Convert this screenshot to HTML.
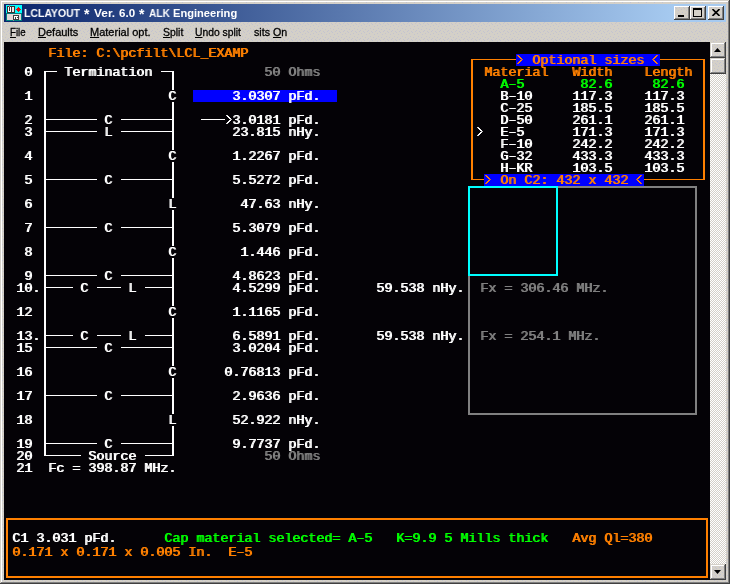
<!DOCTYPE html>
<html><head><meta charset="utf-8"><style>
html,body{margin:0;padding:0;width:730px;height:584px;overflow:hidden;background:#d4d0c8;}
body{position:relative;}
body>div,body>span{position:absolute;}
.t{position:absolute;will-change:transform;font-family:"Liberation Mono",monospace;font-weight:normal;text-shadow:1px 0 0 currentColor;font-size:13.333px;line-height:12px;height:12px;white-space:pre;}
.ttl{position:absolute;will-change:transform;font-family:"Liberation Sans",sans-serif;font-weight:bold;font-size:11px;line-height:18px;color:#fff;white-space:pre;}
.mnu{position:absolute;font-family:"Liberation Sans",sans-serif;font-size:11px;line-height:14px;color:#000;white-space:pre;-webkit-text-stroke:0.3px #000;}
</style></head><body>
<div style="left:0px;top:0px;width:730px;height:584px;background:#d4d0c8;"></div>
<div style="left:1px;top:1px;width:728px;height:1px;background:#fff;"></div>
<div style="left:1px;top:1px;width:1px;height:582px;background:#fff;"></div>
<div style="left:0px;top:583px;width:730px;height:1px;background:#404040;"></div>
<div style="left:729px;top:0px;width:1px;height:584px;background:#404040;"></div>
<div style="left:1px;top:582px;width:728px;height:1px;background:#808080;"></div>
<div style="left:728px;top:1px;width:1px;height:582px;background:#808080;"></div>
<div style="left:4px;top:4px;width:722px;height:18px;background:linear-gradient(to right,#0a246a 0px,#a6caf0 670px);"></div>
<svg style="position:absolute;left:6px;top:5px" width="16" height="16" viewBox="0 0 16 16" shape-rendering="crispEdges">
<rect x="0" y="0" width="16" height="8" fill="#00ffff"/>
<rect x="0" y="8" width="16" height="8" fill="#008080"/>
<rect x="1" y="9" width="14" height="6" fill="#e4d6d6"/>
<rect x="1" y="1" width="8" height="7" fill="#3c3434"/>
<rect x="2" y="2" width="1" height="5" fill="#fff"/><rect x="4" y="2" width="1" height="5" fill="#fff"/><rect x="2" y="6" width="3" height="1" fill="#fff"/>
<rect x="6" y="2" width="2" height="5" fill="#e8e8e8"/>
<rect x="3" y="0" width="1" height="2" fill="#909090"/>
<path d="M12.5 1.5 L15 4.5 L12.5 7.5 L10 4.5 Z" fill="#e01010"/>
<rect x="7" y="10" width="6" height="5" fill="#404040"/>
<rect x="8" y="11" width="1" height="3" fill="#fff"/><rect x="9" y="11" width="1" height="1" fill="#fff"/>
<rect x="10" y="11" width="2" height="1" fill="#fff"/><rect x="10" y="11" width="1" height="3" fill="#fff"/><rect x="10" y="13" width="2" height="1" fill="#fff"/>
<rect x="7" y="15" width="1" height="1" fill="#909090"/>
</svg>
<span class="ttl" style="left:24px;top:4px;transform:scaleX(0.95);transform-origin:0 0;">LCLAYOUT</span>
<span class="ttl" style="left:93.5px;top:4px;transform:scaleX(1.08);transform-origin:0 0;">Ver.</span>
<span class="ttl" style="left:118.5px;top:4px;transform:scaleX(1.05);transform-origin:0 0;">6.0</span>
<span class="ttl" style="left:148.5px;top:4px;transform:scaleX(0.92);transform-origin:0 0;">ALK</span>
<span class="ttl" style="left:172.5px;top:4px;transform:scaleX(1.01);transform-origin:0 0;">Engineering</span>
<span class="ttl" style="left:83.5px;top:5px;font-size:14px;">*</span>
<span class="ttl" style="left:138.5px;top:5px;font-size:14px;">*</span>
<div style="left:674px;top:6px;width:16px;height:14px;background:#404040;"></div>
<div style="left:674px;top:6px;width:15px;height:13px;background:#fff;"></div>
<div style="left:675px;top:7px;width:14px;height:12px;background:#808080;"></div>
<div style="left:675px;top:7px;width:13px;height:11px;background:#d4d0c8;"></div>
<div style="left:690px;top:6px;width:16px;height:14px;background:#404040;"></div>
<div style="left:690px;top:6px;width:15px;height:13px;background:#fff;"></div>
<div style="left:691px;top:7px;width:14px;height:12px;background:#808080;"></div>
<div style="left:691px;top:7px;width:13px;height:11px;background:#d4d0c8;"></div>
<div style="left:708px;top:6px;width:16px;height:14px;background:#404040;"></div>
<div style="left:708px;top:6px;width:15px;height:13px;background:#fff;"></div>
<div style="left:709px;top:7px;width:14px;height:12px;background:#808080;"></div>
<div style="left:709px;top:7px;width:13px;height:11px;background:#d4d0c8;"></div>
<svg style="position:absolute;left:0;top:0" width="730" height="30"><rect x="675" y="7" width="13" height="11" fill="url(#dth)"/><rect x="691" y="7" width="13" height="11" fill="url(#dth)"/><rect x="709" y="7" width="13" height="11" fill="url(#dth)"/></svg>
<div style="left:678px;top:15px;width:6px;height:2px;background:#000;"></div>
<div style="left:693px;top:8px;width:9px;height:9px;background:#000;"></div>
<div style="left:694px;top:10px;width:7px;height:6px;background:#d4d0c8;"></div>
<svg style="position:absolute;left:712px;top:9px" width="8" height="7" viewBox="0 0 8 7"><path d="M0.5 0 L7.5 7 M7.5 0 L0.5 7" stroke="#000" stroke-width="1.6"/></svg>
<svg style="position:absolute;left:0;top:0" width="730" height="584"><defs><pattern id="dth" width="8" height="8" patternUnits="userSpaceOnUse"><rect x="1" y="1" width="1" height="1" fill="#c4c3d0"/><rect x="4" y="0" width="1" height="1" fill="#c4c3d0"/><rect x="6" y="2" width="1" height="1" fill="#c4c3d0"/><rect x="2" y="4" width="1" height="1" fill="#c4c3d0"/><rect x="5" y="5" width="1" height="1" fill="#c4c3d0"/><rect x="0" y="6" width="1" height="1" fill="#c4c3d0"/><rect x="7" y="7" width="1" height="1" fill="#c4c3d0"/><rect x="3" y="7" width="1" height="1" fill="#c4c3d0"/></pattern></defs><rect x="4" y="22" width="722" height="20" fill="url(#dth)"/><rect x="2" y="22" width="2" height="558" fill="url(#dth)"/><rect x="726" y="22" width="2" height="558" fill="url(#dth)"/><rect x="2" y="580" width="726" height="2" fill="url(#dth)"/><rect x="2" y="2" width="726" height="2" fill="url(#dth)"/></svg>
<span class="mnu" style="left:10px;top:25px;transform:scaleX(0.88);transform-origin:0 0;"><u>F</u>ile</span>
<span class="mnu" style="left:38px;top:25px;transform:scaleX(1);transform-origin:0 0;"><u>D</u>efaults</span>
<span class="mnu" style="left:90px;top:25px;transform:scaleX(1);transform-origin:0 0;"><u>M</u>aterial opt.</span>
<span class="mnu" style="left:163px;top:25px;transform:scaleX(0.95);transform-origin:0 0;"><u>S</u>plit</span>
<span class="mnu" style="left:195px;top:25px;transform:scaleX(0.94);transform-origin:0 0;"><u>U</u>ndo split</span>
<span class="mnu" style="left:253.5px;top:25px;transform:scaleX(0.97);transform-origin:0 0;">sits <u>O</u>n</span>
<div style="left:4px;top:42px;width:706px;height:538px;background:#040206;"></div>
<div style="left:710px;top:58px;width:16px;height:506px;background-color:#fff;background-image:linear-gradient(45deg,#d4d0c8 25%,transparent 25%,transparent 75%,#d4d0c8 75%),linear-gradient(45deg,#d4d0c8 25%,transparent 25%,transparent 75%,#d4d0c8 75%);background-size:2px 2px;background-position:0 0,1px 1px;"></div>
<div style="left:710px;top:42px;width:16px;height:16px;background:#404040;"></div>
<div style="left:710px;top:42px;width:15px;height:15px;background:#d4d0c8;"></div>
<div style="left:711px;top:43px;width:14px;height:14px;background:#808080;"></div>
<div style="left:711px;top:43px;width:13px;height:13px;background:#fff;"></div>
<div style="left:712px;top:44px;width:12px;height:12px;background:#d4d0c8;"></div>
<div style="left:710px;top:564px;width:16px;height:16px;background:#404040;"></div>
<div style="left:710px;top:564px;width:15px;height:15px;background:#d4d0c8;"></div>
<div style="left:711px;top:565px;width:14px;height:14px;background:#808080;"></div>
<div style="left:711px;top:565px;width:13px;height:13px;background:#fff;"></div>
<div style="left:712px;top:566px;width:12px;height:12px;background:#d4d0c8;"></div>
<div style="left:710px;top:58px;width:16px;height:16px;background:#404040;"></div>
<div style="left:710px;top:58px;width:15px;height:15px;background:#d4d0c8;"></div>
<div style="left:711px;top:59px;width:14px;height:14px;background:#808080;"></div>
<div style="left:711px;top:59px;width:13px;height:13px;background:#fff;"></div>
<div style="left:712px;top:60px;width:12px;height:12px;background:#d4d0c8;"></div>
<svg style="position:absolute;left:0;top:0" width="730" height="584"><rect x="712" y="44" width="12" height="12" fill="url(#dth)"/><rect x="712" y="60" width="12" height="12" fill="url(#dth)"/><rect x="712" y="566" width="12" height="12" fill="url(#dth)"/></svg>
<svg style="position:absolute;left:714px;top:48px" width="7" height="4"><path d="M3.5 0 L7 4 L0 4 Z" fill="#000"/></svg>
<svg style="position:absolute;left:714px;top:570px" width="7" height="4"><path d="M0 0 L7 0 L3.5 4 Z" fill="#000"/></svg>
<span class="t" style="left:48px;top:48px;color:#ff8000;">File:&nbsp;C:\pcfilt\LCL_EXAMP</span>
<span class="t" style="left:24px;top:67px;color:#ffffff;">0</span>
<span class="t" style="left:24px;top:91px;color:#ffffff;">1</span>
<span class="t" style="left:24px;top:115px;color:#ffffff;">2</span>
<span class="t" style="left:24px;top:127px;color:#ffffff;">3</span>
<span class="t" style="left:24px;top:151px;color:#ffffff;">4</span>
<span class="t" style="left:24px;top:175px;color:#ffffff;">5</span>
<span class="t" style="left:24px;top:199px;color:#ffffff;">6</span>
<span class="t" style="left:24px;top:223px;color:#ffffff;">7</span>
<span class="t" style="left:24px;top:247px;color:#ffffff;">8</span>
<span class="t" style="left:24px;top:271px;color:#ffffff;">9</span>
<span class="t" style="left:16px;top:283px;color:#ffffff;">10.</span>
<span class="t" style="left:16px;top:307px;color:#ffffff;">12</span>
<span class="t" style="left:16px;top:331px;color:#ffffff;">13.</span>
<span class="t" style="left:16px;top:343px;color:#ffffff;">15</span>
<span class="t" style="left:16px;top:367px;color:#ffffff;">16</span>
<span class="t" style="left:16px;top:391px;color:#ffffff;">17</span>
<span class="t" style="left:16px;top:415px;color:#ffffff;">18</span>
<span class="t" style="left:16px;top:439px;color:#ffffff;">19</span>
<span class="t" style="left:16px;top:451px;color:#ffffff;">20</span>
<span class="t" style="left:16px;top:463px;color:#ffffff;">21</span>
<div style="left:44px;top:71px;width:2px;height:385px;background:#ffffff;"></div>
<div style="left:172px;top:71px;width:2px;height:19px;background:#ffffff;"></div>
<div style="left:172px;top:102px;width:2px;height:48px;background:#ffffff;"></div>
<div style="left:172px;top:162px;width:2px;height:36px;background:#ffffff;"></div>
<div style="left:172px;top:210px;width:2px;height:36px;background:#ffffff;"></div>
<div style="left:172px;top:258px;width:2px;height:48px;background:#ffffff;"></div>
<div style="left:172px;top:318px;width:2px;height:48px;background:#ffffff;"></div>
<div style="left:172px;top:378px;width:2px;height:36px;background:#ffffff;"></div>
<div style="left:172px;top:426px;width:2px;height:30px;background:#ffffff;"></div>
<span class="t" style="left:168px;top:91px;color:#ffffff;">C</span>
<span class="t" style="left:168px;top:151px;color:#ffffff;">C</span>
<span class="t" style="left:168px;top:199px;color:#ffffff;">L</span>
<span class="t" style="left:168px;top:247px;color:#ffffff;">C</span>
<span class="t" style="left:168px;top:307px;color:#ffffff;">C</span>
<span class="t" style="left:168px;top:367px;color:#ffffff;">C</span>
<span class="t" style="left:168px;top:415px;color:#ffffff;">L</span>
<div style="left:44px;top:71px;width:13px;height:1px;background:#ffffff;"></div>
<span class="t" style="left:64px;top:67px;color:#ffffff;">Termination</span>
<div style="left:161px;top:71px;width:13px;height:1px;background:#ffffff;"></div>
<div style="left:46px;top:119px;width:51px;height:1px;background:#ffffff;"></div>
<div style="left:121px;top:119px;width:51px;height:1px;background:#ffffff;"></div>
<span class="t" style="left:104px;top:115px;color:#ffffff;">C</span>
<div style="left:46px;top:131px;width:51px;height:1px;background:#ffffff;"></div>
<div style="left:121px;top:131px;width:51px;height:1px;background:#ffffff;"></div>
<span class="t" style="left:104px;top:127px;color:#ffffff;">L</span>
<div style="left:46px;top:179px;width:51px;height:1px;background:#ffffff;"></div>
<div style="left:121px;top:179px;width:51px;height:1px;background:#ffffff;"></div>
<span class="t" style="left:104px;top:175px;color:#ffffff;">C</span>
<div style="left:46px;top:227px;width:51px;height:1px;background:#ffffff;"></div>
<div style="left:121px;top:227px;width:51px;height:1px;background:#ffffff;"></div>
<span class="t" style="left:104px;top:223px;color:#ffffff;">C</span>
<div style="left:46px;top:275px;width:51px;height:1px;background:#ffffff;"></div>
<div style="left:121px;top:275px;width:51px;height:1px;background:#ffffff;"></div>
<span class="t" style="left:104px;top:271px;color:#ffffff;">C</span>
<div style="left:46px;top:347px;width:51px;height:1px;background:#ffffff;"></div>
<div style="left:121px;top:347px;width:51px;height:1px;background:#ffffff;"></div>
<span class="t" style="left:104px;top:343px;color:#ffffff;">C</span>
<div style="left:46px;top:395px;width:51px;height:1px;background:#ffffff;"></div>
<div style="left:121px;top:395px;width:51px;height:1px;background:#ffffff;"></div>
<span class="t" style="left:104px;top:391px;color:#ffffff;">C</span>
<div style="left:46px;top:443px;width:51px;height:1px;background:#ffffff;"></div>
<div style="left:121px;top:443px;width:51px;height:1px;background:#ffffff;"></div>
<span class="t" style="left:104px;top:439px;color:#ffffff;">C</span>
<div style="left:46px;top:287px;width:27px;height:1px;background:#ffffff;"></div>
<div style="left:97px;top:287px;width:24px;height:1px;background:#ffffff;"></div>
<div style="left:145px;top:287px;width:27px;height:1px;background:#ffffff;"></div>
<span class="t" style="left:80px;top:283px;color:#ffffff;">C</span>
<span class="t" style="left:128px;top:283px;color:#ffffff;">L</span>
<div style="left:46px;top:335px;width:27px;height:1px;background:#ffffff;"></div>
<div style="left:97px;top:335px;width:24px;height:1px;background:#ffffff;"></div>
<div style="left:145px;top:335px;width:27px;height:1px;background:#ffffff;"></div>
<span class="t" style="left:80px;top:331px;color:#ffffff;">C</span>
<span class="t" style="left:128px;top:331px;color:#ffffff;">L</span>
<div style="left:44px;top:455px;width:37px;height:1px;background:#ffffff;"></div>
<span class="t" style="left:88px;top:451px;color:#ffffff;">Source</span>
<div style="left:145px;top:455px;width:29px;height:1px;background:#ffffff;"></div>
<span class="t" style="left:48px;top:463px;color:#ffffff;">Fc&nbsp;=&nbsp;398.87&nbsp;MHz.</span>
<div style="left:193px;top:90px;width:144px;height:12px;background:#0000ff;"></div>
<span class="t" style="left:232px;top:91px;color:#ffffff;">3.0307&nbsp;pFd.</span>
<span class="t" style="left:232px;top:115px;color:#ffffff;">3.0181&nbsp;pFd.</span>
<span class="t" style="left:232px;top:127px;color:#ffffff;">23.815&nbsp;nHy.</span>
<span class="t" style="left:232px;top:151px;color:#ffffff;">1.2267&nbsp;pFd.</span>
<span class="t" style="left:232px;top:175px;color:#ffffff;">5.5272&nbsp;pFd.</span>
<span class="t" style="left:240px;top:199px;color:#ffffff;">47.63&nbsp;nHy.</span>
<span class="t" style="left:232px;top:223px;color:#ffffff;">5.3079&nbsp;pFd.</span>
<span class="t" style="left:240px;top:247px;color:#ffffff;">1.446&nbsp;pFd.</span>
<span class="t" style="left:232px;top:271px;color:#ffffff;">4.8623&nbsp;pFd.</span>
<span class="t" style="left:232px;top:283px;color:#ffffff;">4.5299&nbsp;pFd.</span>
<span class="t" style="left:232px;top:307px;color:#ffffff;">1.1165&nbsp;pFd.</span>
<span class="t" style="left:232px;top:331px;color:#ffffff;">6.5891&nbsp;pFd.</span>
<span class="t" style="left:232px;top:343px;color:#ffffff;">3.0204&nbsp;pFd.</span>
<span class="t" style="left:224px;top:367px;color:#ffffff;">0.76813&nbsp;pFd.</span>
<span class="t" style="left:232px;top:391px;color:#ffffff;">2.9636&nbsp;pFd.</span>
<span class="t" style="left:232px;top:415px;color:#ffffff;">52.922&nbsp;nHy.</span>
<span class="t" style="left:232px;top:439px;color:#ffffff;">9.7737&nbsp;pFd.</span>
<span class="t" style="left:264px;top:67px;color:#808080;">50&nbsp;Ohms</span>
<span class="t" style="left:264px;top:451px;color:#808080;">50&nbsp;Ohms</span>
<div style="left:201px;top:119px;width:24px;height:1px;background:#ffffff;"></div>
<span class="t" style="left:376px;top:283px;color:#ffffff;">59.538&nbsp;nHy.</span>
<span class="t" style="left:376px;top:331px;color:#ffffff;">59.538&nbsp;nHy.</span>
<div style="left:468px;top:186px;width:229px;height:2px;background:#808080;"></div>
<div style="left:468px;top:413px;width:229px;height:2px;background:#808080;"></div>
<div style="left:468px;top:186px;width:2px;height:229px;background:#808080;"></div>
<div style="left:695px;top:186px;width:2px;height:229px;background:#808080;"></div>
<div style="left:468px;top:186px;width:90px;height:2px;background:#00ffff;"></div>
<div style="left:468px;top:274px;width:90px;height:2px;background:#00ffff;"></div>
<div style="left:468px;top:186px;width:2px;height:90px;background:#00ffff;"></div>
<div style="left:556px;top:186px;width:2px;height:90px;background:#00ffff;"></div>
<span class="t" style="left:480px;top:283px;color:#808080;">Fx&nbsp;=&nbsp;306.46&nbsp;MHz.</span>
<span class="t" style="left:480px;top:331px;color:#808080;">Fx&nbsp;=&nbsp;254.1&nbsp;MHz.</span>
<div style="left:471px;top:59px;width:234px;height:1px;background:#ff8000;"></div>
<div style="left:471px;top:179px;width:234px;height:1px;background:#ff8000;"></div>
<div style="left:471px;top:59px;width:2px;height:121px;background:#ff8000;"></div>
<div style="left:703px;top:59px;width:2px;height:121px;background:#ff8000;"></div>
<div style="left:516px;top:54px;width:144px;height:12px;background:#0000ff;"></div>
<span class="t" style="left:516px;top:55px;color:#ff8000;">&nbsp;&nbsp;Optional&nbsp;sizes&nbsp;&nbsp;</span>
<span class="t" style="left:484px;top:67px;color:#ff8000;">Material</span>
<span class="t" style="left:572px;top:67px;color:#ff8000;">Width</span>
<span class="t" style="left:644px;top:67px;color:#ff8000;">Length</span>
<span class="t" style="left:500px;top:79px;color:#00ff00;">A–5</span>
<span class="t" style="left:580px;top:79px;color:#00ff00;">82.6</span>
<span class="t" style="left:652px;top:79px;color:#00ff00;">82.6</span>
<span class="t" style="left:500px;top:91px;color:#ffffff;">B–10</span>
<span class="t" style="left:572px;top:91px;color:#ffffff;">117.3</span>
<span class="t" style="left:644px;top:91px;color:#ffffff;">117.3</span>
<span class="t" style="left:500px;top:103px;color:#ffffff;">C–25</span>
<span class="t" style="left:572px;top:103px;color:#ffffff;">185.5</span>
<span class="t" style="left:644px;top:103px;color:#ffffff;">185.5</span>
<span class="t" style="left:500px;top:115px;color:#ffffff;">D–50</span>
<span class="t" style="left:572px;top:115px;color:#ffffff;">261.1</span>
<span class="t" style="left:644px;top:115px;color:#ffffff;">261.1</span>
<span class="t" style="left:500px;top:127px;color:#ffffff;">E–5</span>
<span class="t" style="left:572px;top:127px;color:#ffffff;">171.3</span>
<span class="t" style="left:644px;top:127px;color:#ffffff;">171.3</span>
<span class="t" style="left:500px;top:139px;color:#ffffff;">F–10</span>
<span class="t" style="left:572px;top:139px;color:#ffffff;">242.2</span>
<span class="t" style="left:644px;top:139px;color:#ffffff;">242.2</span>
<span class="t" style="left:500px;top:151px;color:#ffffff;">G–32</span>
<span class="t" style="left:572px;top:151px;color:#ffffff;">433.3</span>
<span class="t" style="left:644px;top:151px;color:#ffffff;">433.3</span>
<span class="t" style="left:500px;top:163px;color:#ffffff;">H–KR</span>
<span class="t" style="left:572px;top:163px;color:#ffffff;">103.5</span>
<span class="t" style="left:644px;top:163px;color:#ffffff;">103.5</span>
<div style="left:484px;top:174px;width:160px;height:12px;background:#0000ff;"></div>
<span class="t" style="left:484px;top:175px;color:#ff8000;">&nbsp;&nbsp;On&nbsp;C2:&nbsp;432&nbsp;x&nbsp;432&nbsp;&nbsp;</span>
<div style="left:6px;top:518px;width:702px;height:2px;background:#ff8000;"></div>
<div style="left:6px;top:576px;width:702px;height:2px;background:#ff8000;"></div>
<div style="left:6px;top:518px;width:2px;height:60px;background:#ff8000;"></div>
<div style="left:706px;top:518px;width:2px;height:60px;background:#ff8000;"></div>
<span class="t" style="left:12px;top:533px;color:#ffffff;">C1&nbsp;3.031&nbsp;pFd.</span>
<span class="t" style="left:164px;top:533px;color:#00ff00;">Cap&nbsp;material&nbsp;selected=&nbsp;A–5</span>
<span class="t" style="left:396px;top:533px;color:#00ff00;">K=9.9&nbsp;5&nbsp;Mills&nbsp;thick</span>
<span class="t" style="left:572px;top:533px;color:#ff8000;">Avg&nbsp;Ql=380</span>
<span class="t" style="left:12px;top:547px;color:#ff8000;">0.171&nbsp;x&nbsp;0.171&nbsp;x&nbsp;0.005&nbsp;In.&nbsp;&nbsp;E–5</span>
<svg style="position:absolute;left:0;top:0" width="730" height="584" viewBox="0 0 730 584"><path d="M226.5 115.5 L230.5 119.5 L226.5 123.5 M227.5 115.5 L231.5 119.5 L227.5 123.5" stroke="#ffffff" stroke-width="1" fill="none" stroke-linecap="square"/><path d="M517.5 55.5 L521.5 59.5 L517.5 63.5 M518.5 55.5 L522.5 59.5 L518.5 63.5" stroke="#ff8000" stroke-width="1" fill="none" stroke-linecap="square"/><path d="M656.5 55.5 L652.5 59.5 L656.5 63.5 M657.5 55.5 L653.5 59.5 L657.5 63.5" stroke="#ff8000" stroke-width="1" fill="none" stroke-linecap="square"/><path d="M477.5 127.5 L481.5 131.5 L477.5 135.5 M478.5 127.5 L482.5 131.5 L478.5 135.5" stroke="#ffffff" stroke-width="1" fill="none" stroke-linecap="square"/><path d="M485.5 175.5 L489.5 179.5 L485.5 183.5 M486.5 175.5 L490.5 179.5 L486.5 183.5" stroke="#ff8000" stroke-width="1" fill="none" stroke-linecap="square"/><path d="M640.5 175.5 L636.5 179.5 L640.5 183.5 M641.5 175.5 L637.5 179.5 L641.5 183.5" stroke="#ff8000" stroke-width="1" fill="none" stroke-linecap="square"/></svg>
</body></html>
